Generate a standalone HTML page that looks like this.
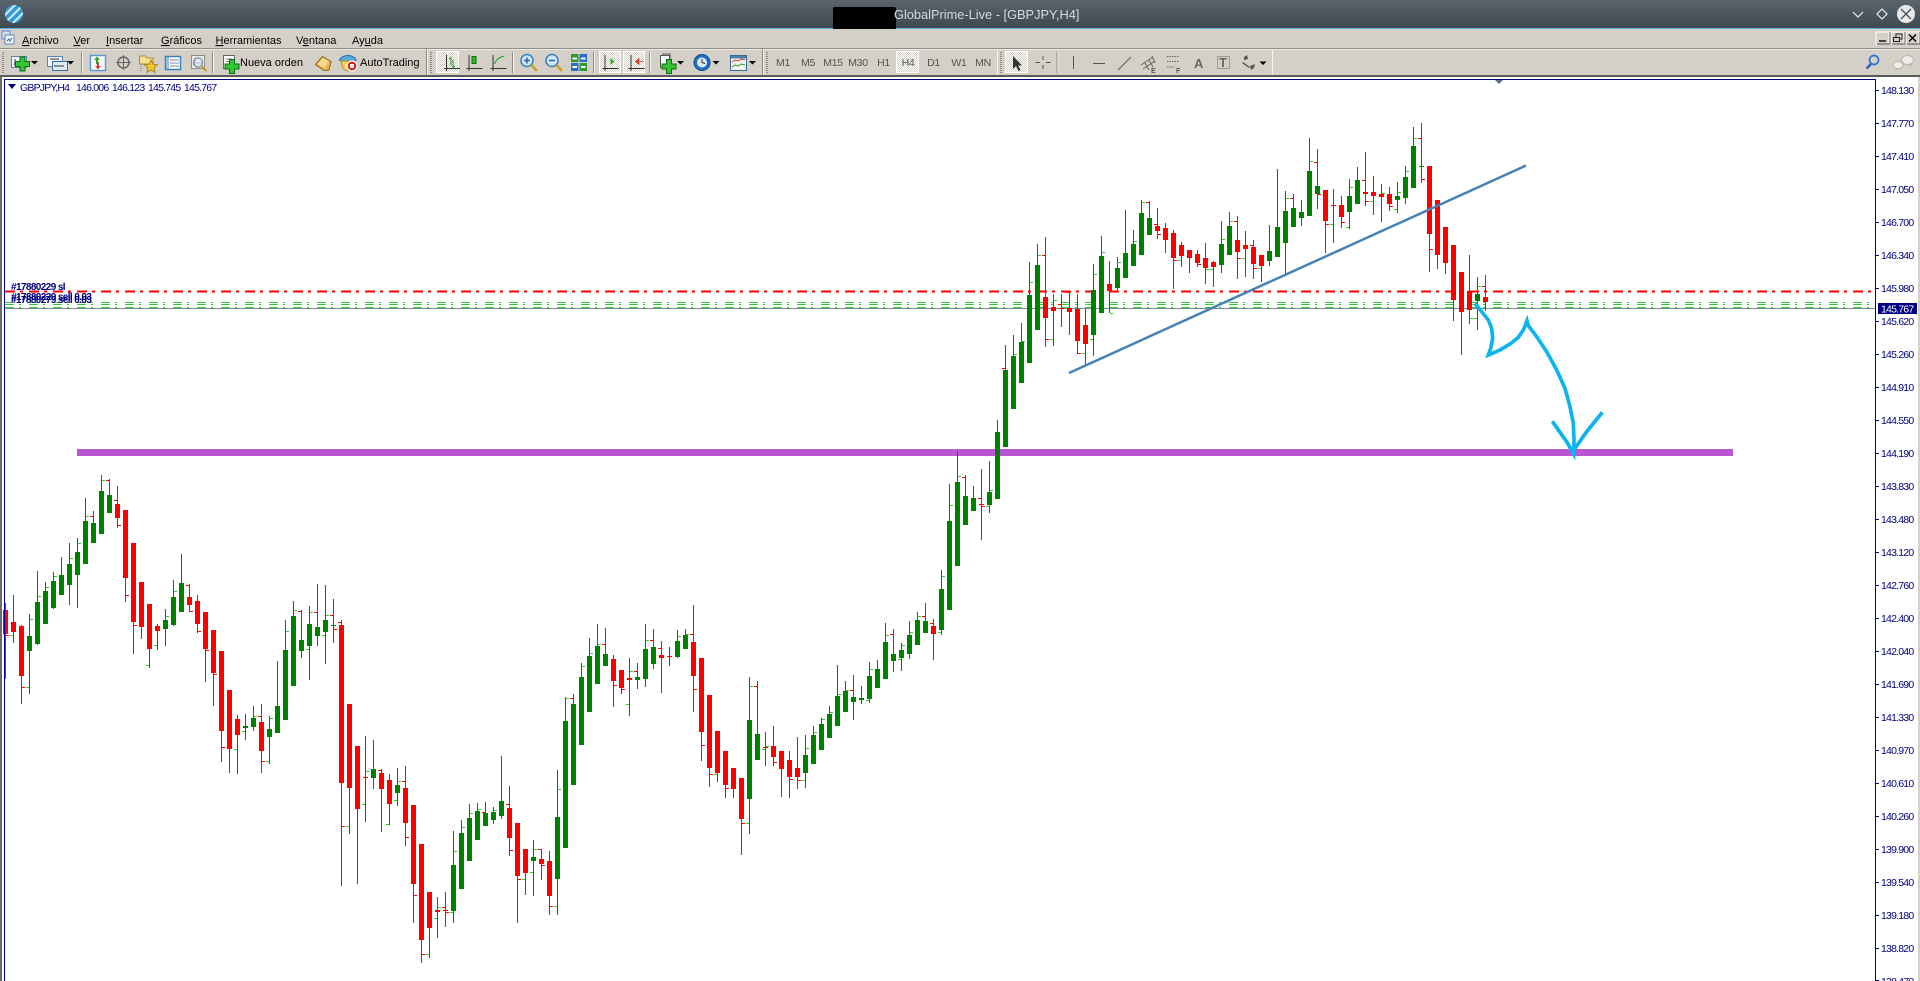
<!DOCTYPE html>
<html lang="es">
<head>
<meta charset="utf-8">
<title>GlobalPrime-Live - [GBPJPY,H4]</title>
<style>
html,body{margin:0;padding:0;background:#fff;width:1920px;height:981px;overflow:hidden}
svg{display:block;position:absolute;left:0;top:0}
text{font-family:"Liberation Sans",sans-serif;white-space:pre}
.m{font-size:11px;fill:#000}
.t{font-size:11px;fill:#000}
.p{font-size:10.5px;letter-spacing:-.8px;fill:#000080}
.h{font-size:10.5px;letter-spacing:-.8px;fill:#000080}
.o{font-size:10px;letter-spacing:-.6px;fill:#000080;font-weight:bold}
.tf{font-size:10.5px;fill:#55534f;text-anchor:middle;letter-spacing:-.3px}
</style>
</head>
<body>
<svg width="1920" height="981" viewBox="0 0 1920 981" xmlns="http://www.w3.org/2000/svg">
<defs>
<linearGradient id="tb" x1="0" y1="0" x2="0" y2="1"><stop offset="0" stop-color="#5a656e"/><stop offset="1" stop-color="#3f4950"/></linearGradient>
<pattern id="dith" width="2" height="2" patternUnits="userSpaceOnUse"><rect width="2" height="2" fill="#fff"/><rect width="1" height="1" fill="#d4d0c8"/><rect x="1" y="1" width="1" height="1" fill="#d4d0c8"/></pattern>
<clipPath id="logo"><circle cx="14" cy="14" r="9"/></clipPath>
<g id="plus"><path d="M-2.5-7h5v4.500h4.500v5h-4.500v4.500h-5v-4.500h-4.500v-5h4.500z" fill="#35c435" stroke="#0b6d0b"/></g>
<path id="drop" d="M-3.500 0h7l-3.500 3.500z" fill="#000"/>
<g id="sep"><rect width="1" height="21" fill="#8f8c86"/><rect x="1" width="1" height="21" fill="#f4f2ee"/></g>
<g id="hnd"><path d="M0 0v22" stroke="#8f8c86" stroke-width="2" stroke-dasharray="1 1" fill="none"/></g>
<g id="axis"><path d="M-7 14.500h16M-4.500 1v16" stroke="#333" fill="none"/></g>
</defs>

<!-- title bar -->
<rect width="1920" height="28" fill="url(#tb)"/>
<rect y="28" width="1920" height="1" fill="#56b4e9"/>
<g clip-path="url(#logo)">
<rect x="5" y="5" width="18" height="18" fill="#2f9bd6"/>
<path d="M2 18L18 2M6 22L22 6M10 26L26 10" stroke="#cfe6f2" stroke-width="2.200" fill="none"/>
</g>
<rect x="833" y="7" width="63" height="23" rx="2" fill="#000"/>
<text x="894" y="19" style="font-size:12.800px" fill="#d6dade">GlobalPrime-Live - [GBPJPY,H4]</text>
<path d="M1853 12l5 5 5-5" stroke="#e9ecee" stroke-width="1.200" fill="none"/>
<path d="M1882 9l5 5-5 5-5-5z" stroke="#e9ecee" stroke-width="1.200" fill="none"/>
<circle cx="1906" cy="14" r="9" fill="#e6e8e9"/>
<path d="M1901 9l10 10M1911 9l-10 10" stroke="#444c52" stroke-width="1.300" fill="none"/>

<!-- menu -->
<rect y="29" width="1920" height="19" fill="#d4d0c8"/>
<g>
<rect x="2" y="31" width="8" height="8" fill="#cfe0f4" stroke="#5f86c0"/>
<rect x="5" y="35" width="9" height="9" fill="#eef5ff" stroke="#5f86c0"/>
<path d="M7 41l2-2 1 2 2-3" stroke="#3a6ab0" fill="none"/>
</g>
<text class="m" x="22" y="44"><tspan text-decoration="underline">A</tspan>rchivo</text>
<text class="m" x="73.500" y="44"><tspan text-decoration="underline">V</tspan>er</text>
<text class="m" x="106" y="44"><tspan text-decoration="underline">I</tspan>nsertar</text>
<text class="m" x="161" y="44"><tspan text-decoration="underline">G</tspan>ráficos</text>
<text class="m" x="215.500" y="44"><tspan text-decoration="underline">H</tspan>erramientas</text>
<text class="m" x="296" y="44">V<tspan text-decoration="underline">e</tspan>ntana</text>
<text class="m" x="352" y="44">Ay<tspan text-decoration="underline">u</tspan>da</text>
<rect x="1876" y="32" width="13" height="12" fill="#d4d0c8" stroke="#fff"/><path d="M1877 44h13V32" stroke="#555" fill="none"/><rect x="1879" y="40" width="7" height="2" fill="#444"/>
<rect x="1891" y="32" width="13" height="12" fill="#d4d0c8" stroke="#fff"/><path d="M1892 44h13V32" stroke="#555" fill="none"/><path d="M1896 37v-3h6v5h-2M1893.500 37.500h6v4h-6z" stroke="#222" fill="none"/>
<rect x="1906" y="32" width="13" height="12" fill="#d4d0c8" stroke="#fff"/><path d="M1907 44h13V32" stroke="#555" fill="none"/><path d="M1909 34.500l7 7M1916 34.500l-7 7" stroke="#000" stroke-width="1.400" fill="none"/>

<!-- toolbar -->
<rect y="48" width="1920" height="1" fill="#8f8c86"/>
<rect y="49" width="1920" height="1" fill="#eeebe6"/>
<rect y="50" width="1920" height="25" fill="#d4d0c8"/>
<rect y="75" width="1920" height="2" fill="#5a5a5a"/>

<use href="#hnd" x="3" y="52"/>
<g>
<rect x="11.500" y="56.500" width="15" height="11" fill="#f2f6fb" stroke="#5b82ad"/><path d="M15 59v7M14 64h10" stroke="#333" fill="none"/>
<use href="#plus" x="22.500" y="64"/>
</g>
<use href="#drop" x="34.500" y="61"/>
<g>
<rect x="47.500" y="56.500" width="15" height="10" fill="#f2f6fb" stroke="#5b82ad"/>
<rect x="52.500" y="61.500" width="15" height="9" fill="#dfe9f5" stroke="#3f6a9e"/><path d="M50 59h9M54 66h10" stroke="#333" fill="none"/>
</g>
<use href="#drop" x="70.500" y="61"/>
<use href="#sep" x="81" y="52"/>
<g>
<rect x="90.500" y="55.500" width="15" height="15" fill="#fff" stroke="#5b9ad0" stroke-width="1.500"/>
<path d="M96 64v-4h-2l3-3.500 3 3.500h-2v4z" fill="#1fae1f"/><path d="M97 62v4h-2l3 3.500 3-3.500h-2v-4z" fill="#d9402b"/>
</g>
<g><circle cx="123.500" cy="62.500" r="5.500" fill="none" stroke="#666" stroke-width="1.500"/><path d="M123.500 55v15M116 62.500h15" stroke="#666" fill="none"/></g>
<g>
<path d="M139.500 58v-2h6l1.500 2h6v6h-13.500z" fill="#f7e191" stroke="#a78a34"/>
<path d="M151 60l2 4.300 4.500.5-3.300 3 .9 4.600-4.100-2.300-4.100 2.300.9-4.600-3.300-3 4.500-.5z" fill="#f2c62c" stroke="#9a7a16" stroke-width=".8"/>
<path d="M141 64v7" stroke="#777" stroke-dasharray="1 1" fill="none"/>
</g>
<g>
<rect x="165.500" y="56.500" width="15" height="13" fill="#fff" stroke="#3a7fc0" stroke-width="1.500"/>
<rect x="166" y="57" width="3" height="12" fill="#8fc0ea"/>
<path d="M171 60h8M171 63h8M171 66h8" stroke="#6d8fb3" fill="none"/><path d="M170 60h1M170 63h1M170 66h1" stroke="#d33" fill="none"/>
</g>
<g>
<rect x="191.500" y="55.500" width="13" height="13" fill="#e9e7e2" stroke="#8f8c86"/>
<path d="M195 58v7M194 63h8" stroke="#555" fill="none"/>
<circle cx="198" cy="62.500" r="4.500" fill="#dfeafa" fill-opacity=".7" stroke="#7b8fa5" stroke-width="1.300"/>
<path d="M201.500 66l5 5" stroke="#c49a1e" stroke-width="2.200" fill="none"/>
</g>
<use href="#sep" x="212" y="52"/>
<g>
<rect x="223.500" y="55.500" width="11" height="13" fill="#fff" stroke="#666"/><path d="M226 59h6M226 61.500h6M226 64h4" stroke="#777" fill="none"/>
<use href="#plus" x="232" y="66.500"/>
</g>
<text class="t" x="240" y="66">Nueva orden</text>
<g>
<path d="M315.500 64.500l7-8 8.500 5-2 8.500-5 .5z" fill="#e3b34c" stroke="#8a641a"/>
<path d="M317 64l6-6.500 6 3.500-4.500 7z" fill="#f6d88a"/>
</g>
<g>
<path d="M339.500 60c3-6 14-6 16.500 0-4 3-12 3-16.500 0z" fill="#5da8dc" stroke="#2a6c9e"/>
<path d="M341.500 61c0 7 3 10 7 10s7-3 7-10z" fill="#f4d35d" stroke="#b08d22"/>
<circle cx="352" cy="66" r="5" fill="#d8201a" stroke="#fff" stroke-width="1.300"/><rect x="350" y="64" width="4" height="4" fill="#fff"/>
</g>
<text class="t" x="360" y="66">AutoTrading</text>

<rect x="426" y="49" width="1" height="26" fill="#8f8c86"/><rect x="427" y="49" width="1" height="26" fill="#f4f2ee"/>
<use href="#hnd" x="431" y="52"/>
<rect x="436.500" y="51.500" width="22" height="21" fill="url(#dith)" stroke="#fff"/>
<g transform="translate(451,54)"><use href="#axis"/><path d="M0 2.500v9M2 5.500v9M0 4.500h-2M2 12.500h2" stroke="#1a9a1a" fill="none"/></g>
<g transform="translate(473.500,54)"><use href="#axis"/><rect x="-1.500" y="2.500" width="4" height="7" fill="#2bbb2b" stroke="#0b6d0b"/></g>
<g transform="translate(497.500,54)"><use href="#axis"/><path d="M-3 10c2-5 5-7 10-8" stroke="#1a9a1a" fill="none"/></g>
<use href="#sep" x="512" y="52"/>
<g><circle cx="527" cy="60.500" r="6" fill="#cfe6fb" stroke="#3a7fc0" stroke-width="1.500"/><path d="M524 60.500h6M527 57.500v6" stroke="#2a62a8" stroke-width="1.500" fill="none"/><path d="M531.500 65l5.500 6" stroke="#c9a21e" stroke-width="2.500" fill="none"/></g>
<g><circle cx="552" cy="60.500" r="6" fill="#cfe6fb" stroke="#3a7fc0" stroke-width="1.500"/><path d="M549 60.500h6" stroke="#2a62a8" stroke-width="1.500" fill="none"/><path d="M556.500 65l5.500 6" stroke="#c9a21e" stroke-width="2.500" fill="none"/></g>
<g><rect x="571" y="54" width="7.500" height="8" fill="#2f9a2f"/><rect x="579.500" y="54" width="7.500" height="8" fill="#2b6fc4"/><rect x="571" y="63" width="7.500" height="8" fill="#2b6fc4"/><rect x="579.500" y="63" width="7.500" height="8" fill="#2f9a2f"/><path d="M572.500 58.500h4.500M581 58.500h4.500M572.500 67h4.500M581 67h4.500" stroke="#fff" stroke-width="2" fill="none"/></g>
<use href="#sep" x="593" y="52"/>
<rect x="599.500" y="51.500" width="21" height="21" fill="url(#dith)" stroke="#fff"/>
<g transform="translate(609.500,54)"><use href="#axis"/><path d="M1 4l4 3.500-4 3.500z" fill="#1fae1f"/></g>
<rect x="623.500" y="51.500" width="21" height="21" fill="url(#dith)" stroke="#fff"/>
<g transform="translate(635.500,54)"><use href="#axis"/><path d="M3 7.500h5M0 7.500l3.500-3v6z" fill="#d9402b" stroke="#d9402b" stroke-width=".8"/></g>
<use href="#sep" x="649" y="52"/>
<g><rect x="660.500" y="55.500" width="9" height="12" fill="#fff" stroke="#555"/><path d="M663 55v-1h7v8" stroke="#555" fill="none"/><use href="#plus" x="669" y="66.500"/></g>
<use href="#drop" x="680.500" y="61"/>
<g><circle cx="702" cy="62.500" r="8" fill="#1f6fc9" stroke="#134a90"/><circle cx="702" cy="62.500" r="5" fill="#dce9f7"/><path d="M702 59v3.500l3 1" stroke="#233" fill="none"/></g>
<use href="#drop" x="716" y="61"/>
<g><rect x="730.500" y="55.500" width="16" height="15" fill="#f3f6f1" stroke="#3a6a8e"/><rect x="731" y="56" width="15" height="2.500" fill="#4a83b0"/><path d="M732 62l3-2 3 1 3-2 4 1" stroke="#d33" fill="none"/><path d="M732 67l3-2 3 1 3-2 4 1" stroke="#2b9a2b" fill="none"/></g>
<use href="#drop" x="752.500" y="61"/>
<rect x="762" y="49" width="1" height="26" fill="#8f8c86"/><rect x="763" y="49" width="1" height="26" fill="#f4f2ee"/>
<use href="#hnd" x="767" y="52"/>
<text class="tf" x="783" y="66">M1</text>
<text class="tf" x="808" y="66">M5</text>
<text class="tf" x="833" y="66">M15</text>
<text class="tf" x="858" y="66">M30</text>
<text class="tf" x="883.500" y="66">H1</text>
<rect x="896.500" y="51.500" width="22" height="21" fill="url(#dith)" stroke="#fff"/>
<text class="tf" x="908" y="66">H4</text>
<text class="tf" x="933.500" y="66">D1</text>
<text class="tf" x="959" y="66">W1</text>
<text class="tf" x="983" y="66">MN</text>
<rect x="997" y="49" width="1" height="26" fill="#f4f2ee"/>
<use href="#hnd" x="1001" y="52"/>
<rect x="1005.500" y="51.500" width="22" height="21" fill="url(#dith)" stroke="#fff"/>
<path d="M1013 56v13l3-3 2.500 5 2-1-2.500-4.500h4z" fill="#333"/>
<path d="M1043 56v13M1035.500 62.500h15" stroke="#555" fill="none"/><rect x="1040" y="60" width="6" height="5" fill="#d4d0c8"/>
<use href="#sep" x="1056.500" y="52"/>
<path d="M1073.500 56v13" stroke="#555" fill="none"/>
<path d="M1093 63.500h12" stroke="#555" fill="none"/>
<path d="M1118 70l13-13" stroke="#777" stroke-width="1.300" fill="none"/>
<g stroke="#666" fill="none"><path d="M1141 65l12-8M1143 69l12-8M1145 63l4 7M1149 60l4 7M1152 56l3 7"/></g><text x="1151" y="73" style="font-size:7px;font-weight:bold" fill="#555">E</text>
<path d="M1167 56.500h12M1167 61.500h12M1167 67h8" stroke="#666" stroke-dasharray="1.500 1" fill="none"/><text x="1176" y="73" style="font-size:7px;font-weight:bold" fill="#555">F</text>
<text x="1194" y="68" style="font-size:13px;font-weight:bold" fill="#666">A</text>
<rect x="1217.500" y="56.500" width="12" height="12" fill="none" stroke="#666" stroke-dasharray="1 1"/><text x="1219" y="67" style="font-size:13px;font-weight:bold" fill="#666">T</text>
<g fill="#555"><path d="M1244 57l3-2 1 4-4 1zM1250 66l5-2-1 4-3 2zM1243 62l7 5-1 1-7-5z"/></g>
<use href="#drop" x="1263" y="61.500"/>
<rect x="1272" y="49" width="1" height="26" fill="#f4f2ee"/>

<g fill="none"><circle cx="1874" cy="60" r="4.500" stroke="#2d6ed6" stroke-width="1.700"/><path d="M1871 64l-4.500 4.500" stroke="#2d5eb0" stroke-width="2.500"/></g>
<g>
<ellipse cx="1907.500" cy="60" rx="6" ry="4.500" fill="#eeece8" stroke="#b8b5ae"/>
<path d="M1909 64l2.500 3-.5-3.500z" fill="#a8a59e"/>
<ellipse cx="1898" cy="65" rx="5" ry="3.500" fill="#eeece8" stroke="#b8b5ae"/>
<path d="M1896 68l-1 2.500 3-2.500z" fill="#a8a59e"/>
</g>

<!-- chart area -->
<rect x="0" y="77" width="1920" height="904" fill="#fff"/>
<rect x="0" y="77" width="2" height="904" fill="#6b6b6b"/>
<rect x="1918" y="77" width="2" height="904" fill="#d4d0c8"/>

<!-- order / level lines -->
<g shape-rendering="crispEdges" fill="none">
<path d="M5 291.500H1872" stroke="#f00" stroke-width="2" stroke-dasharray="10 5 3 6"/>
<path d="M5 302.500H1872M5 304.500H1872M5 307.500H1872" stroke="#32cd32" stroke-dasharray="9 5 2 8"/>
<path d="M5 308.500H1875" stroke="#778899"/>
</g>
<rect x="77" y="449" width="1656" height="7" fill="#ba55d3"/>
<g class="labels">
<text class="o" x="11" y="290">#17880229 sl</text>
<text class="o" x="11" y="300">#17880229 sell 0.03</text>
<text class="o" x="11" y="303">#17880279 sell 0.03</text>
</g>

<!-- candles, generated below -->
<g id="candles" shape-rendering="crispEdges"></g>

<!-- drawn objects -->
<path d="M1069 373L1526 165.500" stroke="#4682b4" stroke-width="2.500" fill="none"/>
<g transform="translate(1400,260) scale(.33333)" fill="none" stroke="#0cb4ee" stroke-width="11" stroke-linejoin="miter">
<path d="M225 130L245 155 265 180 275 205 278 235 272 265 265 285 300 270 330 252 355 232 370 210 381 182 385 197 410 230 440 275 470 330 495 385 510 440 520 490 522 540 521 582 500 545 475 510 457 484"/>
<path d="M525 565L560 515 607 457"/>
</g>

<!-- chart frame -->
<rect x="4" y="79" width="1872" height="1" fill="#000080"/>
<rect x="4" y="79" width="1" height="902" fill="#0000a0"/>
<rect x="1875" y="79" width="1" height="902" fill="#000080"/>
<path d="M1495 80h8l-4 4z" fill="#5a6f8c"/>
<path d="M8 84h8l-4 5z" fill="#000080"/>
<text class="h" x="20" y="91">GBPJPY,H4</text>
<text class="h" x="76" y="91">146.006</text>
<text class="h" x="112" y="91">146.123</text>
<text class="h" x="148" y="91">145.745</text>
<text class="h" x="184" y="91">145.767</text>

<!-- price scale -->
<g fill="#000080" shape-rendering="crispEdges">
<path d="M1876 90h3v1h-3zM1876 123h3v1h-3zM1876 156h3v1h-3zM1876 189h3v1h-3zM1876 222h3v1h-3zM1876 255h3v1h-3zM1876 288h3v1h-3zM1876 321h3v1h-3zM1876 354h3v1h-3zM1876 387h3v1h-3zM1876 420h3v1h-3zM1876 453h3v1h-3zM1876 486h3v1h-3zM1876 519h3v1h-3zM1876 552h3v1h-3zM1876 585h3v1h-3zM1876 618h3v1h-3zM1876 651h3v1h-3zM1876 684h3v1h-3zM1876 717h3v1h-3zM1876 750h3v1h-3zM1876 783h3v1h-3zM1876 816h3v1h-3zM1876 849h3v1h-3zM1876 882h3v1h-3zM1876 915h3v1h-3zM1876 948h3v1h-3zM1876 980h3v1h-3z"/>
</g>
<g>
<text class="p" x="1881" y="94">148.130</text>
<text class="p" x="1881" y="127">147.770</text>
<text class="p" x="1881" y="160">147.410</text>
<text class="p" x="1881" y="193">147.050</text>
<text class="p" x="1881" y="226">146.700</text>
<text class="p" x="1881" y="259">146.340</text>
<text class="p" x="1881" y="292">145.980</text>
<text class="p" x="1881" y="325">145.620</text>
<text class="p" x="1881" y="358">145.260</text>
<text class="p" x="1881" y="391">144.910</text>
<text class="p" x="1881" y="424">144.550</text>
<text class="p" x="1881" y="457">144.190</text>
<text class="p" x="1881" y="490">143.830</text>
<text class="p" x="1881" y="523">143.480</text>
<text class="p" x="1881" y="556">143.120</text>
<text class="p" x="1881" y="589">142.760</text>
<text class="p" x="1881" y="622">142.400</text>
<text class="p" x="1881" y="655">142.040</text>
<text class="p" x="1881" y="688">141.690</text>
<text class="p" x="1881" y="721">141.330</text>
<text class="p" x="1881" y="754">140.970</text>
<text class="p" x="1881" y="787">140.610</text>
<text class="p" x="1881" y="820">140.260</text>
<text class="p" x="1881" y="853">139.900</text>
<text class="p" x="1881" y="886">139.540</text>
<text class="p" x="1881" y="919">139.180</text>
<text class="p" x="1881" y="952">138.820</text>
<text class="p" x="1881" y="985">138.470</text>
</g>
<rect x="1878" y="303" width="39" height="11" fill="#000080"/>
<text class="p" x="1881" y="312.500" style="fill:#fff">145.767</text>
</svg>
<script>
var groups=[
{b:470,r:`r 400 420 492 628 rR495
r 375 456 486 518 gL496
r 465 468 618 702 rR652
g 432 498 543 672 gR448 gL652
g 303 396 522 525 gR379
g 336 363 462 462 gR352
g 306 333 414 417 gR319
g 261 315 375 375
g 219 282 345 405 gR265
g 205 246 315 414 gR220
g 84 153 282 282 gR139
g 123 159 219 219 rL139
g 15 63 192 192 gR31
g 27 75 129 129 rL31
r 48 102 144 174 rL91 rR166
r 120 120 324 396 rR376
r 219 219 456 552 rR466
r 336 336 471 507
r 402 402 537 594 gL586
r 462 468 483 540 gL526
g 417 450 477 528 gR439
g 330 381 465 468 gR364
g 252 339 426 426
r 342 381 405 426 rL345 rR424
r 375 393 462 489 rR482
r 426 426 537 636 rR541
r 480 480 609 708 rR613
r 543 543 783 876 rR832
r 660 660 838 909
r 735 747 795 912 gL838
g 732 768 774 810 gL784
g 708 744 771 783 gR739
r 702 756 843 909 rL739 rR874
g 738 777 801 882 gR745 gL874
g 573 708 789 789
g 450 540 750 750 gR484
g 393 438 648 648 gR421
g 420 510 543 564 rL424
g 408 462 528 630 gR427 gL538
g 342 471 498 528 rL427
g 345 450 486 582 gR436 gL496
g 387 465 468 519 rL436 rR478
r 450 465 939 1248 rL457 rR1069
r 702 702 954 1092 gL1069
r 828 828 1017 1242
r 798 921 924 1056 gR904 gL1003
g 810 897 924 957
r 897 909 957 1086 rL900
r 912 930 1002 1065 gL1063
g 894 945 969 1008 gR934 gL991
r 888 954 1059 1128 rL934 rR1102
r 1005 1005 1242 1359 rR1276
r 1122 1122 1410 1479 rR1453
r 1266 1266 1374 1464 gL1453
r 1281 1320 1326 1404 gR1312 gL1345
r 1266 1320 1323 1371 rL1312 rR1327
g 1083 1185 1323 1359 gR1144 gL1327
g 1050 1089 1257 1257 gR1072
g 1002 1044 1173 1173 gR1030
g 999 1023 1110 1110 gR1018
g 996 1029 1068 1068 rL1026
g 1011 1026 1050 1062 gR1020
g 858 993 1038 1047
r 948 1014 1104 1158 rL1002 rR1141
r 1059 1059 1218 1359 rR1228
r 1137 1137 1209 1275 gL1228
g 1110 1161 1173 1278 gR1138 gL1207
r 1137 1167 1182 1230 rL1137 rR1185
r 1143 1173 1278 1335 rR1309
g 900 1041 1227 1335 gR958 gL1309
g 682 753 1134 1134 gR685
g 672 702 945 945 rL685
g 579 621 825 825 gR589
g 504 558 726 726 gR550
g 462 528 642 642 gR523
g 474 552 588 588 rL523
r 555 567 633 711 rR646
r 600 600 654 672 rR658
r 564 624 630 738 gR604 gL703
g 579 621 630 657 rL604
g 462 537 627 651 gR511
g 477 531 582 597 rL511
r 513 555 564 669 rL535
r 531 558 562 588
g 480 513 561 564 gR498
g 477 495 537 537 gR493
r 405 516 618 726 rL493 rR658
r 564 564 786 873 rR826
r 675 675 894 951 rR913
r 783 783 909 936 gL913
r 843 843 945 984 rR955
r 894 894 957 984
r 924 924 1047 1155 rR1060
g 621 750 987 1092 gR649 gL1060
g 633 792 870 870 rL649
r 786 831 834 888 gR829 gL838
r 768 829 861 888 rR877
r 843 843 897 981
r 843 870 921 984 rR928
r 801 894 921 957 rR930
g 795 855 909 954 gR835 gL931
g 768 795 882 882 gR786
g 744 762 840 840 gR748
g 708 732 804 804 gR727
g 585 678 768 768 gR673
g 633 663 726 726 gR660
g 615 681 696 750 rL661
g 648 684 690 702
g 576 618 687 699 gR598 gL691
g 570 597 654 654
g 459 516 627 627 gR496
g 477 552 573 606 rL493
g 519 540 564 603 gR525 gL568
g 453 495 552 567 gR487
g 426 450 525 525 gR439
g 399 453 489 489 rL439
r 447 468 492 570 rL460
g 300 357 480 495 gR319 gL487
g 42 153 420 420 gR106
g -57 36 288 288 gR19`},
{b:440,r:`g 105 168 255 255 rL112
g 138 174 213 213
r 87 192 195 300 rL175 rR199
g 63 156 195 219 gR151 gL199
g -60 -24 177 177`},
{b:120,r:`g 675 750 980 980 rL745
g 645 708 867 867 gR703
g 609 665 789 789 gR663
g 426 525 729 729 gR487
g 372 435 630 630 gR406
r 351 531 594 681 rL406 rR658
r 522 561 573 678 gR541 gL658
r 522 565 568 621 rL553
r 516 564 576 645 rL516
r 522 567 663 702 rR700
r 567 615 672 738 gL700
g 432 510 645 708 gR461 gL658
g 348 408 579 579 gR397
r 423 492 513 580 gR580
g 411 444 504 510 gR427
g 270 399 474 474
g 330 372 438 438 gR364
g 240 279 405 405 gR247
g 243 294 345 345 rL247
r 264 318 333 357 rL311 rR343
r 309 324 359 399
r 330 339 414 507 rR421
r 366 375 408 441 gL421
r 390 390 414 459
r 390 402 429 441 rR433
r 369 414 444 492 gR448
r 423 426 441 501 gL448
g 303 372 435 459 gR358
g 276 318 405 405 gR304
r 288 360 396 477 rL304 rR415
r 333 375 387 471 gL415
r 360 381 432 477 rL375 rR445
r 405 405 438 486 gL445
g 315 393 423 438
g 147 321 411 411
g 213 273 369 465 gR235
g 222 264 321 321 rL235
g 240 276 294 318
g 54 153 288 288 gR124
g 87 198 222 267 rL127 rR223
r 210 210 303 399 rR313
r 207 255 258 369 gL313
r 228 255 291 324 rR306
g 177 228 276 327 gR202 gL322
g 141 180 252 252
r 96 216 222 258 rL180 rR243
r 168 216 228 285 gL243
r 192 222 231 306 gR219
r 201 223 252 273 rR259
g 186 228 240 279 gR216 gL268
g 138 171 234 252 gR153
g 21 78 204 204 gR55
g 9 139 142 189 rL55 rR176
r 138 138 342 456 rR387
r 240 240 406 447
r 321 321 429 462
r 375 375 540 603
r 456 456 576 705
r 405 513 570 612 gR595
g 471 522 543 630 gR499 gL595
r 465 531 546 572 rL499`}
];
var i=0,G='',R='',TG='',TR='';
function box(x,a,w,b){return 'M'+x+' '+a+'h'+w+'v'+(b-a)+'h'+(-w)+'z'}
groups.forEach(function(g){
  var Y=function(v){return Math.round(g.b+v/3)};
  g.r.split('\n').forEach(function(line){
    var p=line.trim().split(' '),x=5+8*i,d;
    var hi=Y(+p[1]),t=Y(+p[2]),bt=Y(+p[3]),lo=Y(+p[4]);
    if(bt<=t)bt=t+2;
    if(lo<bt)lo=bt;
    d=box(x,hi,1,lo)+box(x-2,t,5,bt);
    if(p[0]=='g')G+=d;else R+=d;
    p.slice(5).forEach(function(k){
      var y=Y(+k.slice(2)),s=k[1]=='L'?x-3:x+1,m=box(s,y,3,y+1);
      if(k[0]=='g')TG+=m;else TR+=m;
    });
    i++;
  });
});
document.getElementById('candles').innerHTML=
 '<path fill="#32cd32" d="'+TG+'"/><path fill="#f00" d="'+TR+'"/>'+
 '<path fill="#f00" d="'+R+'"/><path fill="#008000" d="'+G+'"/>';
</script>
</body>
</html>
